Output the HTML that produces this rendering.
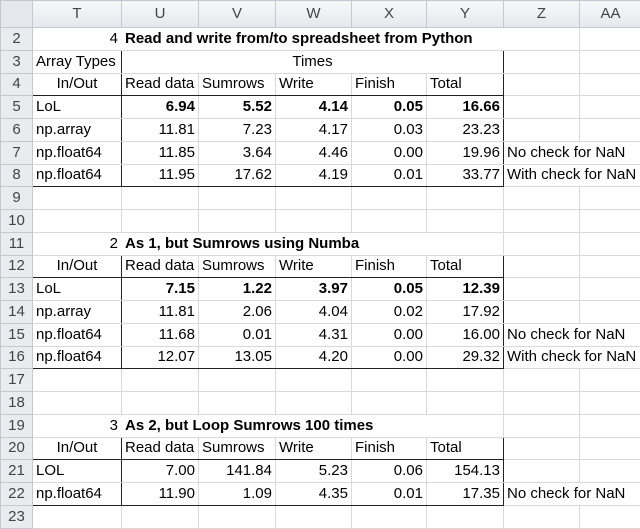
<!DOCTYPE html>
<html><head><meta charset="utf-8"><style>
body{margin:0;width:640px;height:518px;overflow:hidden;background:#fff;font-family:"Liberation Sans",sans-serif;font-size:15px;color:#000}
table{border-collapse:collapse;table-layout:fixed;position:absolute;left:0;top:0;width:641px}
td{border:1px solid #d9d9d9;padding:0 3px;height:22.75px;white-space:nowrap;overflow:visible;line-height:18px;box-sizing:border-box}
tr.h td{height:27px;background:linear-gradient(#f7f8fa,#e4e7ec);color:#444;text-align:center;border-color:#c5c9cf;font-size:15px}
td.n{background:#e9ebef;color:#444;text-align:center;border-color:#c5c9cf;padding:0}
.r{text-align:right}.c{text-align:center}.b{font-weight:bold}
.L{border-left:1px solid #222}.R{border-right:1px solid #222}.T{border-top:1px solid #222}.B{border-bottom:1px solid #222}
.nr{border-right-color:transparent}
</style></head><body>
<table>
<colgroup><col style="width:32px"><col style="width:89px"><col style="width:77px"><col style="width:77px"><col style="width:76px"><col style="width:75px"><col style="width:77px"><col style="width:76px"><col style="width:62px"></colgroup>
<tr class="h"><td style="background:#e4e7ec"></td><td>T</td><td>U</td><td>V</td><td>W</td><td>X</td><td>Y</td><td>Z</td><td>AA</td></tr>
<tr><td class="n">2</td><td class="r nr">4</td><td class="b nr" colspan="5">Read and write from/to spreadsheet from Python</td><td></td><td></td></tr>
<tr><td class="n">3</td><td class="L T R">Array Types</td><td class="T R c" colspan="5">Times</td><td></td><td></td></tr>
<tr><td class="n">4</td><td class="L R B c">In/Out</td><td class="B">Read data</td><td class="B">Sumrows</td><td class="B">Write</td><td class="B">Finish</td><td class="B R">Total</td><td></td><td></td></tr>
<tr><td class="n">5</td><td class="L R">LoL</td><td class="r b">6.94</td><td class="r b">5.52</td><td class="r b">4.14</td><td class="r b">0.05</td><td class="r b R">16.66</td><td></td><td></td></tr>
<tr><td class="n">6</td><td class="L R">np.array</td><td class="r">11.81</td><td class="r">7.23</td><td class="r">4.17</td><td class="r">0.03</td><td class="r R">23.23</td><td></td><td></td></tr>
<tr><td class="n">7</td><td class="L R">np.float64</td><td class="r">11.85</td><td class="r">3.64</td><td class="r">4.46</td><td class="r">0.00</td><td class="r R">19.96</td><td class="nr">No check for NaN</td><td></td></tr>
<tr><td class="n">8</td><td class="L R B">np.float64</td><td class="r B">11.95</td><td class="r B">17.62</td><td class="r B">4.19</td><td class="r B">0.01</td><td class="r R B">33.77</td><td class="nr">With check for NaN</td><td></td></tr>
<tr><td class="n">9</td><td></td><td></td><td></td><td></td><td></td><td></td><td></td><td></td></tr>
<tr><td class="n">10</td><td></td><td></td><td></td><td></td><td></td><td></td><td></td><td></td></tr>
<tr><td class="n">11</td><td class="r nr">2</td><td class="b nr" colspan="4">As 1, but Sumrows using Numba</td><td></td><td></td><td></td></tr>
<tr><td class="n">12</td><td class="L T R B c">In/Out</td><td class="T B">Read data</td><td class="T B">Sumrows</td><td class="T B">Write</td><td class="T B">Finish</td><td class="T B R">Total</td><td></td><td></td></tr>
<tr><td class="n">13</td><td class="L R">LoL</td><td class="r b">7.15</td><td class="r b">1.22</td><td class="r b">3.97</td><td class="r b">0.05</td><td class="r b R">12.39</td><td></td><td></td></tr>
<tr><td class="n">14</td><td class="L R">np.array</td><td class="r">11.81</td><td class="r">2.06</td><td class="r">4.04</td><td class="r">0.02</td><td class="r R">17.92</td><td></td><td></td></tr>
<tr><td class="n">15</td><td class="L R">np.float64</td><td class="r">11.68</td><td class="r">0.01</td><td class="r">4.31</td><td class="r">0.00</td><td class="r R">16.00</td><td class="nr">No check for NaN</td><td></td></tr>
<tr><td class="n">16</td><td class="L R B">np.float64</td><td class="r B">12.07</td><td class="r B">13.05</td><td class="r B">4.20</td><td class="r B">0.00</td><td class="r R B">29.32</td><td class="nr">With check for NaN</td><td></td></tr>
<tr><td class="n">17</td><td></td><td></td><td></td><td></td><td></td><td></td><td></td><td></td></tr>
<tr><td class="n">18</td><td></td><td></td><td></td><td></td><td></td><td></td><td></td><td></td></tr>
<tr><td class="n">19</td><td class="r nr">3</td><td class="b nr" colspan="4">As 2, but Loop Sumrows 100 times</td><td></td><td></td><td></td></tr>
<tr><td class="n">20</td><td class="L T R B c">In/Out</td><td class="T B">Read data</td><td class="T B">Sumrows</td><td class="T B">Write</td><td class="T B">Finish</td><td class="T B R">Total</td><td></td><td></td></tr>
<tr><td class="n">21</td><td class="L R">LOL</td><td class="r">7.00</td><td class="r">141.84</td><td class="r">5.23</td><td class="r">0.06</td><td class="r R">154.13</td><td></td><td></td></tr>
<tr><td class="n">22</td><td class="L R B">np.float64</td><td class="r B">11.90</td><td class="r B">1.09</td><td class="r B">4.35</td><td class="r B">0.01</td><td class="r R B">17.35</td><td class="nr">No check for NaN</td><td></td></tr>
<tr><td class="n">23</td><td></td><td></td><td></td><td></td><td></td><td></td><td></td><td></td></tr>
</table>
</body></html>
